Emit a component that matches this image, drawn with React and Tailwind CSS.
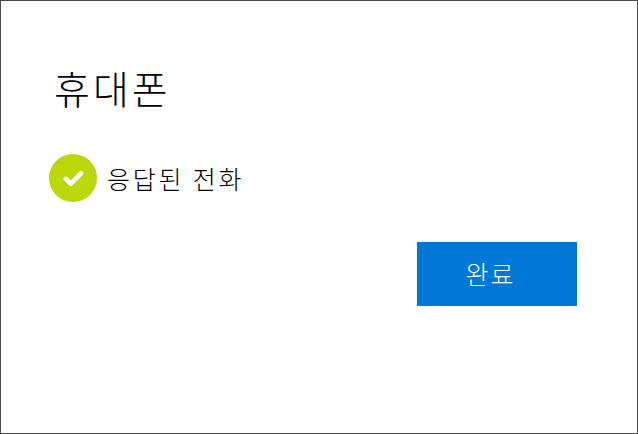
const App = () => {
  return (
    <div className="w-[638px] h-[434px] border border-[#4a4a4a] bg-white text-black font-['Noto_Sans_CJK_KR',sans-serif] pt-[62px] pl-[48px] pr-[60px]">
      <h1 className="ml-[5px] text-[39px] leading-[48px] font-light tracking-[3px]">휴대폰</h1>
      <div className="mt-[43px] flex items-center gap-[10px]">
        <div className="flex items-center justify-center w-[48px] h-[48px] rounded-full bg-[#bad80a]">
          <svg viewBox="0 0 22 18" className="w-[21px] h-[17px]">
            <path d="M3 9.5 L8.2 14.5 L19 3.5" fill="none" stroke="#fff" strokeWidth="5" strokeLinejoin="round" strokeLinecap="round" />
          </svg>
        </div>
        <span className="text-[25px] leading-[32px] font-light tracking-[2.8px]">응답된 전화</span>
      </div>
      <div className="mt-[40px] flex justify-end">
        <button className="w-[160px] h-[64px] pr-[13px] bg-[#0078d7] text-white text-[25px] font-light tracking-[2px]">완료</button>
      </div>
    </div>
  );
};

export default App;
